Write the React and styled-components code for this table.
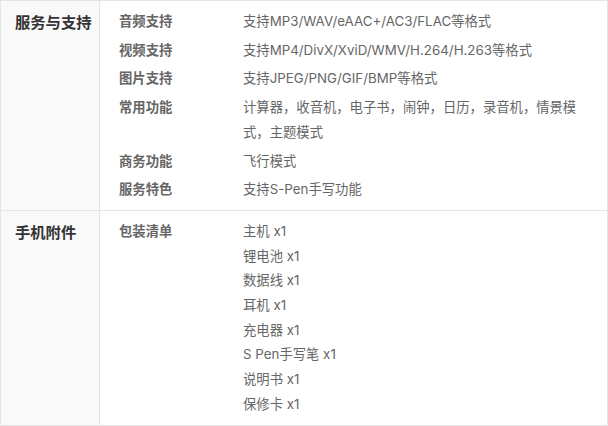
import React from "react";
import styled, { createGlobalStyle } from "styled-components";

const GlobalStyle = createGlobalStyle`
  body {
    margin: 0;
    background: #fff;
    font-family: Inter, "Noto Sans CJK SC", sans-serif;
  }
`;

const Table = styled.div`
  width: 608px;
  box-sizing: border-box;
  border: 1px solid #e5e5e5;
  font-size: 13.33px;
  line-height: 24.7px;
  color: #666;
`;

const Group = styled.div`
  display: flex;

  & + & {
    border-top: 1px solid #e5e5e5;
  }
`;

const GroupTitle = styled.div`
  flex: none;
  width: 99px;
  box-sizing: border-box;
  padding: 8px 0 0 14px;
  background: #f9f9f9;
  border-right: 1px solid #e5e5e5;
  font-family: "Noto Sans CJK SC", sans-serif;
  font-size: 15.3px;
  font-weight: 700;
  color: #333;
`;

const GroupBody = styled.div`
  flex: 1;
  padding: 6px 20px 6px 19px;
`;

const Row = styled.div`
  display: flex;
  padding: 2px 0;
`;

const Label = styled.div`
  flex: none;
  width: 124px;
  font-family: "Noto Sans CJK SC", sans-serif;
  font-weight: 700;
  color: #666;
`;

const Value = styled.div`
  flex: 1;
  min-width: 0;
`;

const Item = styled.div``;

const specs = [
  {
    title: "服务与支持",
    rows: [
      ["音频支持", "支持MP3/WAV/eAAC+/AC3/FLAC等格式"],
      ["视频支持", "支持MP4/DivX/XviD/WMV/H.264/H.263等格式"],
      ["图片支持", "支持JPEG/PNG/GIF/BMP等格式"],
      ["常用功能", "计算器，收音机，电子书，闹钟，日历，录音机，情景模式，主题模式"],
      ["商务功能", "飞行模式"],
      ["服务特色", "支持S-Pen手写功能"],
    ],
  },
  {
    title: "手机附件",
    rows: [
      [
        "包装清单",
        [
          "主机 x1",
          "锂电池 x1",
          "数据线 x1",
          "耳机 x1",
          "充电器 x1",
          "S Pen手写笔 x1",
          "说明书 x1",
          "保修卡 x1",
        ],
      ],
    ],
  },
];

export default function App() {
  return (
    <>
      <GlobalStyle />
      <Table>
        {specs.map((g) => (
          <Group key={g.title}>
            <GroupTitle>{g.title}</GroupTitle>
            <GroupBody>
              {g.rows.map(([label, value]) => (
                <Row key={label}>
                  <Label>{label}</Label>
                  <Value>
                    {Array.isArray(value)
                      ? value.map((v) => <Item key={v}>{v}</Item>)
                      : value}
                  </Value>
                </Row>
              ))}
            </GroupBody>
          </Group>
        ))}
      </Table>
    </>
  );
}
